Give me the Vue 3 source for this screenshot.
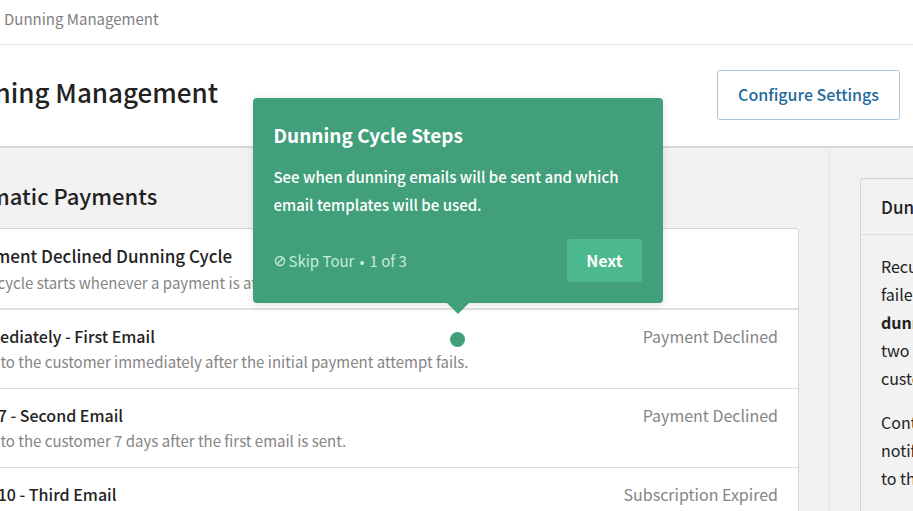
<script setup>
import { ref } from 'vue'

const steps = ref([
  { title: 'Immediately - First Email', text: 'Sent to the customer immediately after the initial payment attempt fails.', template: 'Payment Declined' },
  { title: 'Day 7 - Second Email', text: 'Sent to the customer 7 days after the first email is sent.', template: 'Payment Declined' },
  { title: 'Day 10 - Third Email', text: '', template: 'Subscription Expired' },
])

const tour = ref({ open: true, step: 1, total: 3 })

function nextStep() {
  if (tour.value.step < tour.value.total) tour.value.step++
  else tour.value.open = false
}
</script>

<template>
  <div class="shell">
    <div class="page">
      <nav class="crumbs" aria-label="Breadcrumb">
        <a href="#" class="crumb">Dunning Management</a>
      </nav>

      <header class="header">
        <h1 class="header-title">Dunning Management</h1>
        <button type="button" class="btn-outline">Configure Settings</button>
      </header>

      <div class="columns">
        <main class="main">
          <h2 class="section-title">Automatic Payments</h2>
          <div class="card">
            <div class="card-head">
              <h3 class="card-title">Payment Declined Dunning Cycle</h3>
              <p class="item-text">This cycle starts whenever a payment is attempted and fails.</p>
            </div>
            <ul class="steps">
              <li v-for="(step, idx) in steps" :key="step.title" class="step">
                <div class="step-body">
                  <h3 class="item-title">{{ step.title }}</h3>
                  <p class="item-text">{{ step.text }}</p>
                </div>
                <span class="step-template">{{ step.template }}</span>

                <div v-if="idx === 0 && tour.open" class="tour-anchor">
                  <div class="tour" role="dialog" aria-labelledby="tour-title">
                    <h4 id="tour-title" class="tour-title">Dunning Cycle Steps</h4>
                    <p class="tour-text">See when dunning emails will be sent and which email templates will be used.</p>
                    <div class="tour-foot">
                      <button type="button" class="tour-skip" @click="tour.open = false">
                        <svg class="tour-icon" viewBox="0 0 12 12" aria-hidden="true">
                          <circle cx="6" cy="6" r="4.5" />
                          <path d="M2.8 9.2 9.2 2.8" />
                        </svg>
                        Skip Tour
                      </button>
                      <span class="tour-bullet">•</span>
                      <span class="tour-count">{{ tour.step }} of {{ tour.total }}</span>
                      <button type="button" class="tour-next" @click="nextStep">Next</button>
                    </div>
                  </div>
                </div>
              </li>
            </ul>
          </div>
        </main>

        <aside class="side">
          <section class="help">
            <h3 class="help-title">Dunning</h3>
            <div class="help-body">
              <p>Recurring<br />failed<br /><strong>dunning</strong><br />two<br />customer</p>
              <p>Contact<br />notified<br />to the</p>
            </div>
          </section>
        </aside>
      </div>
    </div>
  </div>
</template>

<style>
body {
  margin: 0;
  background: #f2f2f2;
}
</style>

<style scoped>
.shell {
  height: 100vh;
  overflow: hidden;
  font-family: "Noto Sans CJK JP", "Open Sans", sans-serif;
  font-size: 15px;
  color: #222;
}

/* content runs past both edges of the window */
.page {
  margin: 0 -160px 0 -104px;
}

h1, h2, h3, h4, p, ul {
  margin: 0;
  padding: 0;
}

button {
  font: inherit;
  cursor: pointer;
}

/* ── Top ── */
.crumbs {
  padding: 9px 0 15px 108px;
  background: #fff;
  border-bottom: 1px solid #e4e4e4;
}

.crumb {
  display: block;
  line-height: 20px;
  color: #808080;
  text-decoration: none;
}

.header {
  display: flex;
  align-items: flex-start;
  justify-content: space-between;
  padding: 25px 173px 26px 48px;
  background: #fff;
  border-bottom: 2px solid #d8d8d8;
}

.header-title {
  font-size: 26px;
  font-weight: 500;
  line-height: 44px;
}

.btn-outline {
  height: 50px;
  padding: 0 20px 2px;
  border: 1px solid #a9c6da;
  border-radius: 3px;
  background: #fff;
  color: #236a9a;
  font-size: 16px;
  font-weight: 500;
}

/* ── Columns ── */
.columns {
  display: flex;
}

.main {
  flex: 1;
  padding: 30px 30px 0 44px;
}

.section-title {
  margin-bottom: 16px;
  font-size: 22px;
  font-weight: 500;
  line-height: 34px;
}

.card {
  background: #fff;
  border: 1px solid #d2d2d2;
  border-radius: 3px;
}

.card-head {
  padding: 13px 20px 12px 24px;
  border-bottom: 2px solid #e0e0e0;
}

.card-title {
  font-size: 17px;
  font-weight: 500;
  line-height: 28px;
}

.item-title {
  font-size: 16px;
  font-weight: 500;
  line-height: 26px;
}

.item-text {
  min-height: 26px;
  line-height: 26px;
  color: #858585;
}

.steps {
  list-style: none;
}

.step {
  position: relative;
  display: flex;
  justify-content: space-between;
  padding: 13px 20px 13px 24px;
  border-bottom: 1px solid #dedede;
}

.step-template {
  font-size: 16px;
  line-height: 26px;
  color: #858585;
}

/* ── Tour ── */
.tour-anchor {
  position: absolute;
  top: 22px;
  right: 333px;
  width: 15px;
  height: 15px;
  border-radius: 50%;
  background: #419f7b;
}

.tour {
  position: absolute;
  bottom: 44px;
  left: 50%;
  width: 410px;
  padding: 21px;
  box-sizing: border-box;
  transform: translateX(-50%);
  border-radius: 4px;
  background: #419f7b;
  color: #fff;
  box-shadow: 0 2px 8px rgba(0, 0, 0, 0.12);
}

.tour::after {
  content: "";
  position: absolute;
  top: 100%;
  left: 50%;
  margin-left: -11px;
  border: 11px solid transparent;
  border-top-color: #419f7b;
  border-bottom: 0;
}

.tour-title {
  margin-bottom: 12px;
  font-size: 19px;
  font-weight: 700;
  line-height: 32px;
}

.tour-text {
  margin-bottom: 20px;
  font-weight: 500;
  line-height: 28px;
}

.tour-foot {
  display: flex;
  align-items: center;
  color: #c3ecd8;
}

.tour-skip {
  display: flex;
  align-items: center;
  gap: 3px;
  padding: 0;
  border: 0;
  background: none;
  color: inherit;
}

.tour-icon {
  width: 12px;
  height: 12px;
  fill: none;
  stroke: currentColor;
  stroke-width: 1.4;
}

.tour-bullet {
  margin: 0 5px;
}

.tour-next {
  height: 43px;
  margin-left: auto;
  padding: 0 19px 2px;
  border: 0;
  border-radius: 3px;
  background: #4bb88f;
  color: #fff;
  font-size: 16px;
  font-weight: 700;
}

/* ── Side ── */
.side {
  flex: 0 0 244px;
  padding: 30px 0 0 30px;
  box-sizing: border-box;
  border-left: 1px solid #e6e6e6;
}

.help {
  border: 1px solid #d2d2d2;
  border-radius: 3px;
}

.help-title {
  padding: 14px 20px;
  border-bottom: 1px solid #dcdcdc;
  font-size: 17px;
  font-weight: 500;
  line-height: 27px;
}

.help-body {
  padding: 17px 20px 300px;
  font-size: 16px;
  line-height: 28px;
}

.help-body p + p {
  margin-top: 16px;
}

.help-body strong {
  font-weight: 700;
}
</style>
